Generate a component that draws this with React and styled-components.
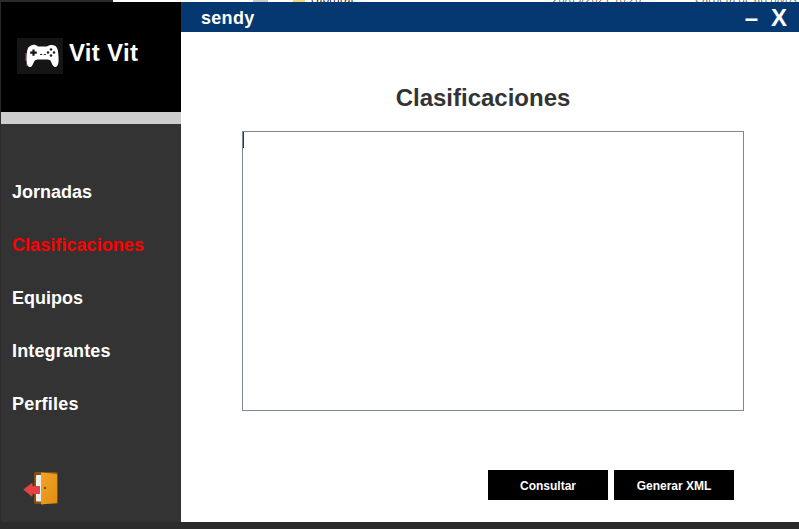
import React from "react";
import styled, { createGlobalStyle } from "styled-components";

const GlobalStyle = createGlobalStyle`
  *, *::before, *::after { box-sizing: border-box; }
  body {
    margin: 0;
    background: #2b2b2b;
    font-family: "Liberation Sans", Arial, sans-serif;
    font-weight: 700;
    font-variant-ligatures: none;
    overflow: hidden;
  }
`;

const Desktop = styled.div`
  width: 799px;
  height: 529px;
  display: grid;
  grid-template-rows: 2px 520px 7px;
  background: #2b2b2b;
`;

const Explorer = styled.div`
  position: relative;
  height: 2px;
  margin-left: 113px;
  overflow: hidden;
  background: #fff;
  font: 400 11px/14px "Open Sans", sans-serif;
`;

const ExplorerText = styled.span`
  position: absolute;
  top: -8px;
  left: ${(p) => p.$x}px;
  color: ${(p) => p.$color || "#6d6d6d"};
  white-space: nowrap;
`;

const ExplorerMark = styled.span`
  position: absolute;
  top: 0;
  left: ${(p) => p.$x}px;
  width: ${(p) => p.$w}px;
  height: 2px;
  background: ${(p) => p.$color};
`;

const Window = styled.div`
  display: flex;
  margin-left: 1px;
`;

const Sidebar = styled.aside`
  width: 180px;
  display: flex;
  flex-direction: column;
  background: #333;
`;

const Brand = styled.div`
  height: 110px;
  display: flex;
  align-items: flex-start;
  gap: 6px;
  padding: 36px 0 0 16px;
  background: #000;
  color: #fff;
  font-size: 24px;
  line-height: 30px;
`;

const BrandName = styled.span`
  letter-spacing: 0.3px;
  white-space: nowrap;
`;

const Divider = styled.div`
  height: 12px;
  background: #cdcdcd;
`;

const Nav = styled.nav`
  display: flex;
  flex-direction: column;
  gap: 31px;
  padding: 57px 0 0 11px;
`;

const NavItem = styled.a`
  font-size: 18px;
  line-height: 22px;
  letter-spacing: ${(p) => p.$tracking || 0}px;
  color: ${(p) => (p.$active ? "#f00" : "#fff")};
`;

const Exit = styled.div`
  margin: auto 0 16px 22px;
  height: 36px;
`;

const Main = styled.main`
  flex: 1;
  display: flex;
  flex-direction: column;
  background: #fff;
`;

const TitleBar = styled.header`
  height: 30px;
  display: flex;
  justify-content: space-between;
  padding: 0 12px 0 20px;
  background: #053870;
  color: #fff;
  font-size: 18px;
  line-height: 32px;
  letter-spacing: 0.3px;
`;

const Controls = styled.div`
  display: flex;
  gap: 13px;
  font-size: 24px;
  line-height: 32px;
  letter-spacing: 0;
`;

const Heading = styled.h1`
  margin: 51px 14px 0 0;
  height: 48px;
  text-align: center;
  color: #333;
  font-size: 24px;
  line-height: 30px;
`;

const TextArea = styled.div`
  width: 502px;
  height: 280px;
  margin-left: 61px;
  border: 1px solid #7a8a99;
`;

const Caret = styled.div`
  width: 1px;
  height: 16px;
  background: #333;
`;

const Actions = styled.div`
  display: flex;
  gap: 6px;
  margin: 59px 0 0 307px;
`;

const Button = styled.button`
  width: 120px;
  height: 30px;
  padding: 1px 0 0;
  border: 0;
  background: #000;
  color: #fff;
  font: 700 12px "Liberation Sans", Arial, sans-serif;
`;

const Gamepad = () => (
  <svg width="46" height="36" viewBox="0 0 46 36">
    <rect width="46" height="36" fill="#151515" />
    <path d="M9 15v8M10 24v4" stroke="#bb3b9b" strokeWidth="1" />
    <path
      d="M14 7.5C16.500 6.300 19 6.800 21 8.500H30C32.500 6.500 36 6.500 38.500 8C40.500 9.500 41 12.500 41.300 16C41.800 21 42 26 40 28.300C38 30 36 28.500 34.800 25.500L33.500 22.500C32 21.200 29.500 21.500 28 21.500H22C19.500 21.500 18 22 17.200 23.500L15.500 27C14 30 11 29.500 10.200 26.500C9.200 22.500 9.500 18 10 14C10.300 10.500 11.500 8.500 14 7.500Z"
      fill="#fff"
    />
    <path d="M16.500 11.500v6.200M13.200 14.600h6.600" stroke="#151515" strokeWidth="2.200" />
    <path d="M23 16.500h2.200M26.800 16.500H29" stroke="#333" strokeWidth="1.200" />
    <g fill="#222">
      <circle cx="34" cy="11.500" r="1.300" />
      <circle cx="31" cy="14.500" r="1.300" />
      <circle cx="37" cy="14.500" r="1.300" />
      <circle cx="34" cy="17.500" r="1.300" />
    </g>
  </svg>
);

const ExitDoor = () => (
  <svg width="36" height="36" viewBox="0 0 36 36">
    <defs>
      <linearGradient id="door" x1="0" y1="0" x2="1" y2="1">
        <stop offset="0" stopColor="#f3a426" />
        <stop offset="1" stopColor="#df8e14" />
      </linearGradient>
    </defs>
    <rect x="11" y="2" width="24" height="32" rx="1.800" fill="#83530d" />
    <rect x="13" y="5" width="7" height="26.500" rx="1" fill="#eeeef0" />
    <path d="M18 2.500L33 3.700Q34 3.800 34 4.800V32Q34 33 33 33.100L18 34.500Z" fill="url(#door)" />
    <circle cx="22" cy="18" r="1.200" fill="#79500d" />
    <path d="M0.300 19.500L8.500 13.200Q9.600 12.600 9.600 14V16H17V24H9.600V25.800Q9.500 27 8.400 26.200Z" fill="#e34242" />
  </svg>
);

const sections = [
  { name: "Jornadas" },
  { name: "Clasificaciones", active: true, tracking: 0.06 },
  { name: "Equipos" },
  { name: "Integrantes", tracking: 0.15 },
  { name: "Perfiles", tracking: 0.2 },
];

export default function App() {
  return (
    <>
      <GlobalStyle />
      <Desktop>
        <Explorer>
          <ExplorerMark $x={140} $w={15} $color="#c9cbd1" />
          <ExplorerMark $x={180} $w={12} $color="#f5d779" />
          <ExplorerText $x={198} $color="#111">capturat</ExplorerText>
          <ExplorerText $x={439}>26/03/2021 10:20</ExplorerText>
          <ExplorerText $x={582}>Carpeta de archivos</ExplorerText>
        </Explorer>
        <Window>
          <Sidebar>
            <Brand>
              <Gamepad />
              <BrandName>Vit Vit</BrandName>
            </Brand>
            <Divider />
            <Nav>
              {sections.map((s) => (
                <NavItem key={s.name} $active={s.active} $tracking={s.tracking}>
                  {s.name}
                </NavItem>
              ))}
            </Nav>
            <Exit>
              <ExitDoor />
            </Exit>
          </Sidebar>
          <Main>
            <TitleBar>
              <span>sendy</span>
              <Controls>
                <span>–</span>
                <span>X</span>
              </Controls>
            </TitleBar>
            <Heading>Clasificaciones</Heading>
            <TextArea>
              <Caret />
            </TextArea>
            <Actions>
              <Button>Consultar</Button>
              <Button>Generar XML</Button>
            </Actions>
          </Main>
        </Window>
      </Desktop>
    </>
  );
}
